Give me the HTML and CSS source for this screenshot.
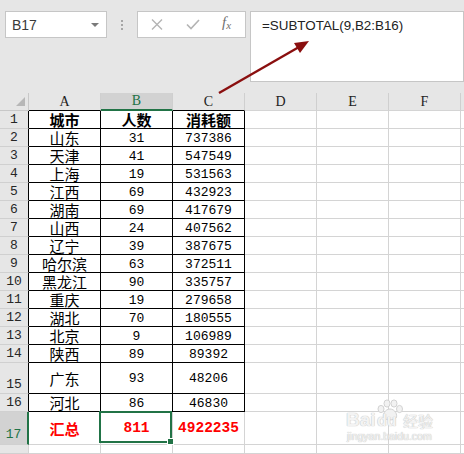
FILE: index.html
```html
<!DOCTYPE html>
<html lang="zh">
<head>
<meta charset="utf-8">
<link rel="stylesheet" href="styles.css">
</head>
<body>
<div class="app">
  <div class="toolbar">
    <div class="namebox"><span>B17</span><span class="caret"></span></div>
    <div class="grip"><i></i><i></i><i></i></div>
    <div class="fxbox">
      <svg class="ico" width="12" height="11" viewBox="0 0 12 11"><path d="M1 0.5 L11 10.5 M11 0.5 L1 10.5" stroke="#b4b4b4" stroke-width="1.4" fill="none"/></svg>
      <svg class="ico" width="14" height="11" viewBox="0 0 14 11"><path d="M1 5.5 L5 9.5 L13 1" stroke="#b4b4b4" stroke-width="1.6" fill="none"/></svg>
      <span class="fx">f<sub>x</sub></span>
    </div>
    <div class="formula">=SUBTOTAL(9,B2:B16)</div>
  </div>

  <div class="sheet">
    <div class="corner"><span class="tri"></span></div>
    <div class="ch bk">A</div><div class="ch sel">B</div><div class="ch bk">C</div><div class="ch">D</div><div class="ch">E</div><div class="ch">F</div><div class="ch last"></div>

    <div class="rh bk">1</div><div class="t cn b">城市</div><div class="t cn b">人数</div><div class="t cn b">消耗额</div><div class="e"></div><div class="e"></div><div class="e"></div><div class="e last"></div>
    <div class="rh bk">2</div><div class="t cn">山东</div><div class="t num">31</div><div class="t num">737386</div><div class="e"></div><div class="e"></div><div class="e"></div><div class="e last"></div>
    <div class="rh bk">3</div><div class="t cn">天津</div><div class="t num">41</div><div class="t num">547549</div><div class="e"></div><div class="e"></div><div class="e"></div><div class="e last"></div>
    <div class="rh bk">4</div><div class="t cn">上海</div><div class="t num">19</div><div class="t num">531563</div><div class="e"></div><div class="e"></div><div class="e"></div><div class="e last"></div>
    <div class="rh bk">5</div><div class="t cn">江西</div><div class="t num">69</div><div class="t num">432923</div><div class="e"></div><div class="e"></div><div class="e"></div><div class="e last"></div>
    <div class="rh bk">6</div><div class="t cn">湖南</div><div class="t num">69</div><div class="t num">417679</div><div class="e"></div><div class="e"></div><div class="e"></div><div class="e last"></div>
    <div class="rh bk">7</div><div class="t cn">山西</div><div class="t num">24</div><div class="t num">407562</div><div class="e"></div><div class="e"></div><div class="e"></div><div class="e last"></div>
    <div class="rh bk">8</div><div class="t cn">辽宁</div><div class="t num">39</div><div class="t num">387675</div><div class="e"></div><div class="e"></div><div class="e"></div><div class="e last"></div>
    <div class="rh bk">9</div><div class="t cn">哈尔滨</div><div class="t num">63</div><div class="t num">372511</div><div class="e"></div><div class="e"></div><div class="e"></div><div class="e last"></div>
    <div class="rh bk">10</div><div class="t cn">黑龙江</div><div class="t num">90</div><div class="t num">335757</div><div class="e"></div><div class="e"></div><div class="e"></div><div class="e last"></div>
    <div class="rh bk">11</div><div class="t cn">重庆</div><div class="t num">19</div><div class="t num">279658</div><div class="e"></div><div class="e"></div><div class="e"></div><div class="e last"></div>
    <div class="rh bk">12</div><div class="t cn">湖北</div><div class="t num">70</div><div class="t num">180555</div><div class="e"></div><div class="e"></div><div class="e"></div><div class="e last"></div>
    <div class="rh bk">13</div><div class="t cn">北京</div><div class="t num">9</div><div class="t num">106989</div><div class="e"></div><div class="e"></div><div class="e"></div><div class="e last"></div>
    <div class="rh bk">14</div><div class="t cn">陕西</div><div class="t num">89</div><div class="t num">89392</div><div class="e"></div><div class="e"></div><div class="e"></div><div class="e last"></div>
    <div class="rh bk">15</div><div class="t cn">广东</div><div class="t num">93</div><div class="t num">48206</div><div class="e"></div><div class="e"></div><div class="e"></div><div class="e last"></div>
    <div class="rh bk">16</div><div class="t cn">河北</div><div class="t num">86</div><div class="t num">46830</div><div class="e"></div><div class="e"></div><div class="e"></div><div class="e last"></div>
    <div class="rh rsel">17</div><div class="e cn red">汇总</div><div class="e num red active">811<span class="selbox"><span class="handle"></span></span></div><div class="e num red">4922235</div><div class="e"></div><div class="e"></div><div class="e"></div><div class="e last"></div>
    <div class="rh"></div><div class="e"></div><div class="e"></div><div class="e"></div><div class="e"></div><div class="e"></div><div class="e"></div><div class="e last"></div>
  </div>

  <svg class="arrow" width="464" height="454" viewBox="0 0 464 454">
    <line x1="219" y1="93" x2="299" y2="47" stroke="#8a0f0f" stroke-width="2.4"/>
    <polygon points="309,41 300,53 294,43" fill="#8a0f0f"/>
  </svg>

  <div class="watermark">
    <span class="wm-bai">Bai</span>
    <svg class="wm-paw" width="28" height="22" viewBox="0 0 28 22">
      <g fill="#f2f2f2" stroke="#d2d2d2" stroke-width="1">
        <ellipse cx="5" cy="10" rx="3" ry="3.6"/>
        <ellipse cx="11" cy="4.5" rx="3" ry="3.6"/>
        <ellipse cx="18" cy="4.5" rx="3" ry="3.6"/>
        <ellipse cx="23.5" cy="10" rx="3" ry="3.6"/>
        <path d="M14 10 C9 10 6 16 8 19 C10 21.5 18 21.5 20 19 C22 16 19 10 14 10 Z"/>
      </g>
    </svg>
    <span class="wm-du">du</span>
    <span class="wm-jy">经验</span>
    <span class="wm-url">jingyan.baidu.com</span>
  </div>
</div>
</body>
</html>
```

FILE: styles.css
```css
* { box-sizing: border-box; }
html, body { margin: 0; padding: 0; background: #ffffff; }
body { font-family: "Liberation Sans", Arial, sans-serif; }

.app {
  position: relative;
  width: 464px;
  height: 454px;
  overflow: hidden;
}

/* ---------- formula bar ---------- */
.toolbar {
  height: 93px;
  background: #e6e6e6;
  display: flex;
  align-items: flex-start;
  padding: 11px 0 0 5px;
}
.namebox {
  width: 102px;
  height: 27px;
  background: #fff;
  border: 1px solid #c6c6c6;
  display: flex;
  align-items: center;
  justify-content: space-between;
  padding: 0 6px 0 6px;
  font-size: 14px;
  color: #3a3a3a;
}
.caret {
  width: 0;
  height: 0;
  border-left: 4px solid transparent;
  border-right: 4px solid transparent;
  border-top: 4px solid #7a7a7a;
  margin-right: 1px;
}
.grip {
  margin: 9px 14px 0 14px;
  width: 2px;
  display: flex;
  flex-direction: column;
  gap: 2px;
}
.grip i {
  display: block;
  width: 2px;
  height: 2px;
  background: #a6a6a6;
}
.fxbox {
  width: 109px;
  height: 27px;
  background: #fff;
  border: 1px solid #c6c6c6;
  display: flex;
  align-items: center;
  padding-left: 13px;
}
.fxbox .ico { display: block; }
.fxbox .ico + .ico { margin-left: 23px; }
.fx {
  margin-left: 22px;
  font-family: "Liberation Serif", serif;
  font-style: italic;
  font-size: 15px;
  color: #707070;
  line-height: 1;
  margin-top: -3px;
}
.fx sub { font-size: 11px; vertical-align: -2px; }
.formula {
  margin-left: 4px;
  width: 214px;
  height: 71px;
  background: #fff;
  border: 1px solid #c6c6c6;
  padding: 5px 0 0 11px;
  font-size: 13.4px;
  line-height: 18px;
  color: #222;
}

/* ---------- sheet grid ---------- */
.sheet {
  display: grid;
  grid-template-columns: 29px repeat(6, 72px) 1fr;
  grid-template-rows: 18px repeat(14, 18px) 31px 18px 33px 1fr;
  height: 361px;
}
.sheet > div {
  border-right: 1px solid #d4d4d4;
  border-bottom: 1px solid #d4d4d4;
  display: flex;
  align-items: center;
  justify-content: center;
  white-space: nowrap;
  min-width: 0;
  color: #000;
}
.sheet > .last { border-right: none; }

.corner {
  background: #e6e6e6;
  justify-content: flex-end !important;
  align-items: flex-end !important;
  padding: 0 3px 4px 0;
  border-right-color: #c8c8c8 !important;
  border-bottom-color: #c8c8c8 !important;
}
.tri {
  width: 0;
  height: 0;
  border-left: 9px solid transparent;
  border-bottom: 9px solid #b7b7b7;
}

.ch {
  background: #e6e6e6;
  border-right-color: #cfcfcf !important;
  font-family: "Liberation Serif", serif;
  font-size: 14px;
  line-height: 15px;
  color: #222 !important;
  align-items: flex-end !important;
  padding-bottom: 1px;
}
.ch.bk { border-bottom-color: #000 !important; }
.ch.sel {
  background: #d2d2d2;
  color: #217346 !important;
  border-bottom: 2px solid #217346 !important;
}

.rh {
  background: #e6e6e6;
  font-family: "Liberation Mono", monospace;
  font-size: 13px;
  line-height: 14px;
  color: #262626 !important;
  align-items: flex-end !important;
  padding-bottom: 1px;
  border-bottom-color: #d0d0d0 !important;
}
.rh.bk { border-right-color: #000 !important; }
.rh.rsel {
  background: #d2d2d2;
  color: #217346 !important;
  border-right: 2px solid #217346 !important;
  padding-bottom: 2px;
}

.t {
  border-right-color: #000 !important;
  border-bottom-color: #000 !important;
}

.cn {
  font-family: "Noto Sans CJK SC", sans-serif;
  font-size: 15px;
  line-height: 17px;
}
.b { font-weight: 700; }
.num {
  font-family: "Liberation Mono", monospace;
  font-size: 13px;
  line-height: 15px;
  padding-top: 1px;
}
.red {
  color: #ff0000 !important;
  font-weight: 700;
}
.num.red { font-size: 14.5px; }

.active { position: relative; overflow: visible; }
.selbox {
  position: absolute;
  left: -2px;
  top: -1px;
  right: 0;
  bottom: 1px;
  border: 2px solid #217346;
  pointer-events: none;
}
.handle {
  position: absolute;
  right: -4px;
  bottom: -4px;
  width: 7px;
  height: 7px;
  background: #217346;
  border: 1px solid #fff;
}

/* ---------- overlays ---------- */
.arrow {
  position: absolute;
  left: 0;
  top: 0;
  pointer-events: none;
}

.watermark {
  position: absolute;
  left: 346px;
  top: 399px;
  width: 92px;
  height: 44px;
  pointer-events: none;
  color: #f3f3f3;
  text-shadow: 0 0 1px #c4c4c4, 0 0 1px #c4c4c4;
}
.watermark span { position: absolute; white-space: nowrap; }
.wm-bai {
  left: 0;
  top: 11px;
  font-family: "Liberation Sans", sans-serif;
  font-weight: 700;
  font-size: 19px;
  line-height: 20px;
}
.wm-paw { position: absolute; left: 30px; top: 0; }
.wm-du {
  left: 31px;
  top: 13px;
  font-family: "Liberation Sans", sans-serif;
  font-weight: 700;
  font-size: 16px;
  line-height: 18px;
}
.wm-jy {
  left: 57px;
  top: 13px;
  font-family: "Noto Sans CJK SC", sans-serif;
  font-size: 15px;
  line-height: 17px;
}
.wm-url {
  left: 1px;
  top: 32px;
  font-family: "Liberation Sans", sans-serif;
  font-size: 10.5px;
  line-height: 11px;
}
```
